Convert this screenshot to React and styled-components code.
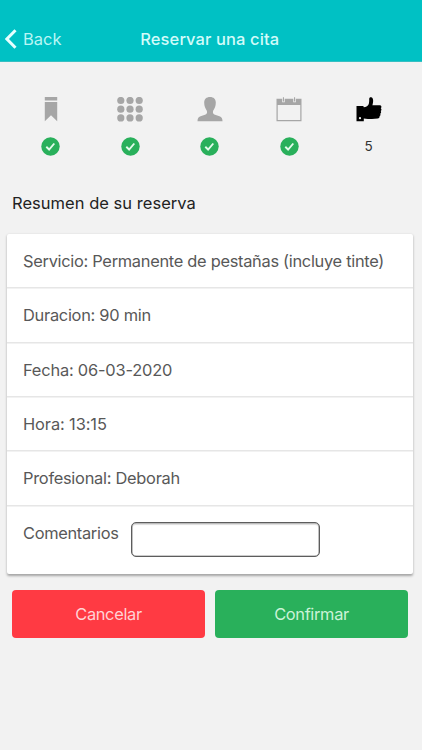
import React from "react";
import styled, { createGlobalStyle } from "styled-components";

const GlobalStyle = createGlobalStyle`
  * { box-sizing: border-box; }
  body { margin: 0; background: #f2f2f2; }
`;

const Screen = styled.div`
  width: 422px;
  height: 750px;
  overflow: hidden;
  background: #f2f2f2;
  font-family: Inter, "Liberation Sans", sans-serif;
  color: #585858;
`;

const Header = styled.header`
  height: 62px;
  padding: 17px 7px 0 4.5px;
  display: grid;
  grid-template-columns: 86px 1fr 86px;
  align-items: center;
  background: #00c1c4;
  border-bottom: 1px solid #37bfc2;
`;

const BackButton = styled.button`
  display: flex;
  align-items: center;
  gap: 6.5px;
  padding: 0;
  border: 0;
  background: none;
  font: 400 16.5px/20px Inter, sans-serif;
  letter-spacing: 0;
  color: #b9f6f5;
`;

const HeaderTitle = styled.h1`
  margin: 0;
  text-align: center;
  white-space: nowrap;
  font-size: 16.5px;
  line-height: 20px;
  font-weight: 500;
  letter-spacing: 0.1px;
  color: #d2fbf9;
`;

const Steps = styled.nav`
  display: grid;
  grid-template-columns: repeat(5, 79.4px);
  padding: 35px 0 0 11.3px;
`;

const Step = styled.div`
  display: flex;
  flex-direction: column;
  align-items: center;
  gap: 15px;
  color: ${(p) => (p.$active ? "#000" : "#a6a6a6")};
`;

const StepStatus = styled.div`
  display: flex;
  align-items: center;
  justify-content: center;
  height: 19px;
  font-size: 13.5px;
  line-height: 19px;
  color: #333;
`;

const SectionTitle = styled.h2`
  margin: 36px 0 0 12px;
  font-size: 16.5px;
  line-height: 22px;
  font-weight: 400;
  letter-spacing: 0.03px;
  color: #222;
`;

const Card = styled.section`
  margin: 20px 9px 0 7px;
  height: 339.5px;
  background: #fff;
  border-radius: 2px;
  box-shadow: 0 1.5px 2.5px rgba(0, 0, 0, 0.32);
`;

const Row = styled.div`
  display: flex;
  align-items: flex-start;
  gap: 12.2px;
  height: ${(p) => (p.$last ? "68px" : "54.35px")};
  padding: 16px 16px 0;
  box-shadow: ${(p) => (p.$last ? "none" : "inset 0 -1px #e6e6e6, 0 1px #f2f2f2")};
`;

const Label = styled.span`
  font-size: 16.4px;
  line-height: 22px;
  white-space: nowrap;
  letter-spacing: ${(p) => p.$tracking}px;
`;

const CommentInput = styled.input`
  width: 189px;
  height: 35px;
  margin-top: 0.5px;
  padding: 0 8px;
  border: 1px solid #5d5d5d;
  border-radius: 5px;
  background: #fff;
  box-shadow: inset 0 0 0 0.6px #999, inset 0 2px 1px #ddd;
  font: inherit;
`;

const Actions = styled.div`
  display: grid;
  grid-template-columns: 193px 193px;
  gap: 10px;
  margin: 16.5px 0 0 12px;
`;

const ActionButton = styled.button`
  height: 48px;
  padding: 0 0 1px;
  border: 0;
  border-radius: 4px;
  background: ${(p) => (p.$danger ? "#ff3a43" : "#29b05b")};
  color: ${(p) => (p.$danger ? "#ffd3d5" : "#ccf3d8")};
  font: 400 16.4px/20px Inter, sans-serif;
  letter-spacing: -0.33px;
`;

const StepIcon = ({ children }) => (
  <svg width="26" height="25" viewBox="0 0 26 25" fill="currentColor">{children}</svg>
);

const Bookmark = () => (
  <StepIcon><path d="M6.8 0h12.4v3.6H6.8zM6.8 5h12.4v19.2L13 18.3l-6.2 5.9z" /></StepIcon>
);

const Dots = () => (
  <StepIcon>
    {[3.8, 13, 22.2].map((x) =>
      [3.5, 12.2, 20.9].map((y) => <circle key={`${x}-${y}`} cx={x} cy={y} r="3.6" />)
    )}
  </StepIcon>
);

const Person = () => (
  <StepIcon>
    <path d="M13 0c3.7 0 5.8 2.1 5.8 5.6 0 1.6-.2 3.2-.8 4.7-.5 1.6-1.7 2.7-2 4.1-.3 1.7.4 2.8 2 3.3l4.5 1.6c2.2.8 3 2.4 3 4.9H.5c0-2.500.8-4.100 3-4.900L8 17.700c1.600-.5 2.300-1.600 2-3.300-.3-1.400-1.500-2.500-2-4.100-.6-1.500-.8-3.100-.8-4.700C7.200 2.100 9.300 0 13 0z" />
  </StepIcon>
);

const Calendar = () => (
  <StepIcon>
    <path d="M.5 1.800h5.700V5.200h2.500V1.800h8.600V5.200h2.500V1.800h5.700v22.500H.5zM1.700 8v15.100h22.600V8z" fillRule="evenodd" />
    <path d="M6.900.3H8v4.200H6.900zM18 .3h1.100v4.200H18z" />
  </StepIcon>
);

const ThumbUp = () => (
  <StepIcon>
    <path d="M.5 9.100h6.800l.5 1.100c2.200-.3 3.600-1.100 4.600-2.500.9-1.500.8-3.400.8-5.600 0-1.700 1-2.100 2-1.800 2 .6 2.500 3.500 1.400 7.100l-.2.900h7.300c2 0 2.200 2.200 1.100 2.900 1 .9.800 2.300-.1 2.800.8 1 .4 2.300-.5 2.700.6 1 .2 2-.6 2.400.2 1.400-.6 2.200-1.900 2.500-4.700.8-9.300.4-13.900-.1v2.700H.5z" />
    <circle cx="4" cy="21.200" r="1.100" fill="#f2f2f2" />
  </StepIcon>
);

const DoneMark = () => (
  <svg width="19" height="19" viewBox="0 0 19 19">
    <circle cx="9.500" cy="9.500" r="9.200" fill="#29b05b" />
    <path d="M5.300 9.800l2.800 2.700 5.200-6" fill="none" stroke="#e2faea" strokeWidth="1.900" />
  </svg>
);

const steps = [Bookmark, Dots, Person, Calendar, ThumbUp];
const details = [
  { text: "Servicio: Permanente de pestañas (incluye tinte)", tracking: -0.29 },
  { text: "Duracion: 90 min", tracking: -0.27 },
  { text: "Fecha: 06-03-2020", tracking: -0.19 },
  { text: "Hora: 13:15", tracking: -0.1 },
  { text: "Profesional: Deborah", tracking: -0.27 },
];

export default function App() {
  return (
    <Screen>
      <GlobalStyle />
      <Header>
        <BackButton>
          <svg width="12" height="20" viewBox="0 0 12 20" fill="none" stroke="#e7ffff" strokeWidth="3">
            <path d="M10.500 1.200L1.900 10l8.600 8.800" />
          </svg>
          Back
        </BackButton>
        <HeaderTitle>Reservar una cita</HeaderTitle>
      </Header>
      <Steps>
        {steps.map((Icon, i) => (
          <Step key={i} $active={i === 4}>
            <Icon />
            <StepStatus>{i === 4 ? "5" : <DoneMark />}</StepStatus>
          </Step>
        ))}
      </Steps>
      <SectionTitle>Resumen de su reserva</SectionTitle>
      <Card>
        {details.map((d) => (
          <Row key={d.text}><Label $tracking={d.tracking}>{d.text}</Label></Row>
        ))}
        <Row $last>
          <Label as="label" htmlFor="comments" $tracking={-0.31}>Comentarios</Label>
          <CommentInput id="comments" />
        </Row>
      </Card>
      <Actions>
        <ActionButton $danger>Cancelar</ActionButton>
        <ActionButton>Confirmar</ActionButton>
      </Actions>
    </Screen>
  );
}
